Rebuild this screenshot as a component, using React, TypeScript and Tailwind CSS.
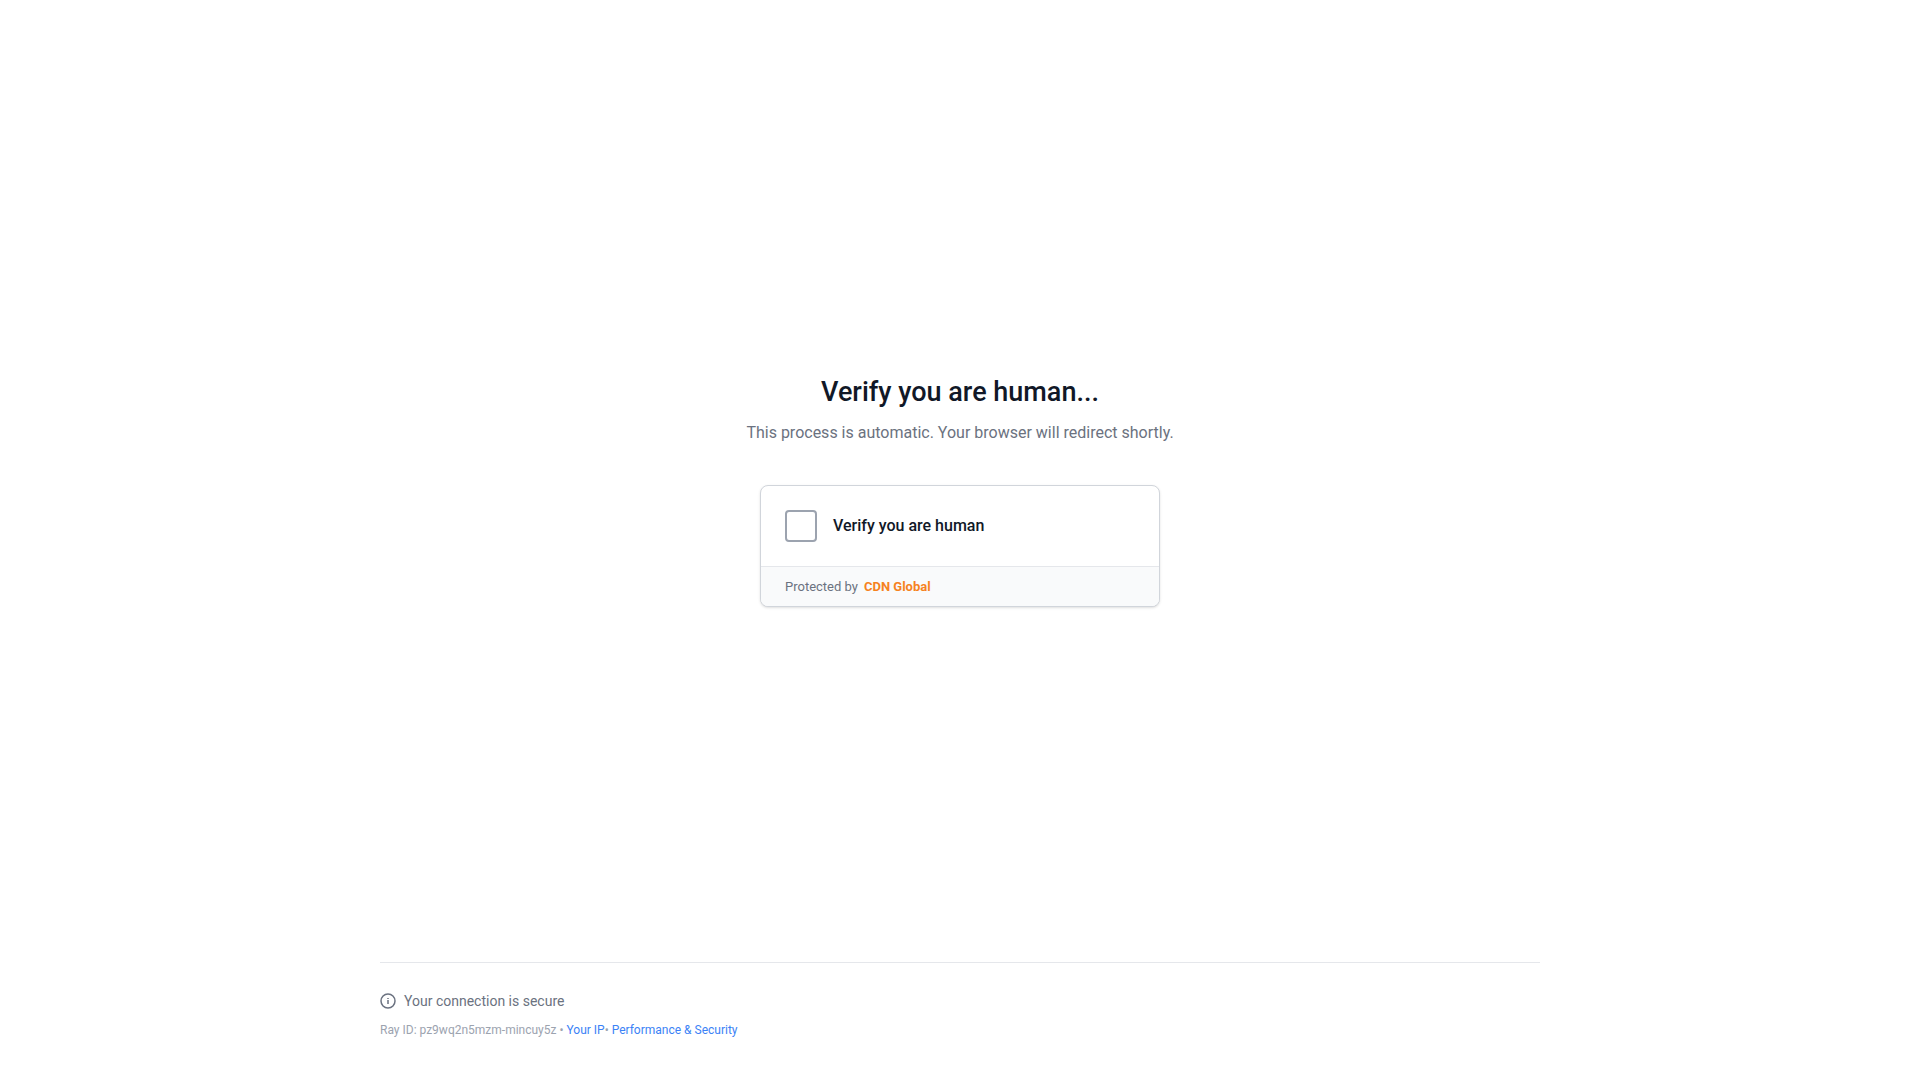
export default function App() {
  return (
    <div className="flex min-h-screen flex-col bg-white font-['Roboto',sans-serif]">
      <main className="flex flex-1 flex-col items-center justify-center px-4 pt-5">
        <h1 className="mb-3 text-[27px] leading-[34px] font-medium text-[#111827]">Verify you are human...</h1>
        <p className="mb-10 text-base text-[#6b7280]">This process is automatic. Your browser will redirect shortly.</p>
        <section className="w-full max-w-[400px] overflow-hidden rounded-lg border border-[#d1d5db] bg-white shadow-sm">
          <label htmlFor="human" className="flex items-center gap-4 p-6 text-base font-medium text-[#111827]">
            <input id="human" type="checkbox" className="size-8 appearance-none rounded-sm border-2 border-[#9ca3af] bg-white" />
            Verify you are human
          </label>
          <div className="flex items-center gap-1.5 border-t border-[#e5e7eb] bg-[#f9fafb] px-6 py-2.5 text-[13px] leading-[19px] text-[#6b7280]">
            <span>Protected by</span>
            <span className="font-bold text-[#f6821f]">CDN Global</span>
          </div>
        </section>
      </main>
      <footer className="mx-auto w-full max-w-[1160px] border-t border-[#e5e7eb] pt-7 pb-[39px]">
        <div className="mb-2 flex items-center gap-2 text-sm text-[#6b7280]">
          <svg viewBox="0 0 16 16" className="size-4" fill="none" stroke="currentColor" strokeWidth="1.5" aria-hidden="true">
            <circle cx="8" cy="8" r="7" />
            <path d="M8 7v4M8 5v1" />
          </svg>
          Your connection is secure
        </div>
        <p className="text-xs leading-[22px] text-[#9ca3af]">
          Ray ID: pz9wq2n5mzm-mincuy5z • <a href="#ip" className="text-[#3b82f6]">Your IP</a>
          • <a href="#security" className="text-[#3b82f6]">Performance &amp; Security</a>
        </p>
      </footer>
    </div>
  );
}
